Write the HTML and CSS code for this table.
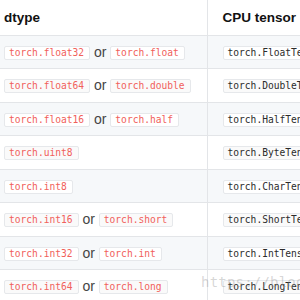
FILE: index.html
```html
<!DOCTYPE html>
<html>
<head>
<meta charset="utf-8">
<link rel="stylesheet" href="styles.css">
</head>
<body>
<div class="wrap">
<table class="tbl">
  <colgroup><col class="c1"><col class="c2"></colgroup>
  <thead>
    <tr><th class="first">dtype</th><th>CPU tensor</th></tr>
  </thead>
  <tbody>
    <tr class="alt"><td class="first"><code class="d">torch.float32</code> or <code class="d">torch.float</code></td><td><code class="t">torch.FloatTensor</code></td></tr>
    <tr><td class="first"><code class="d">torch.float64</code> or <code class="d">torch.double</code></td><td><code class="t">torch.DoubleTensor</code></td></tr>
    <tr class="alt"><td class="first"><code class="d">torch.float16</code> or <code class="d">torch.half</code></td><td><code class="t">torch.HalfTensor</code></td></tr>
    <tr><td class="first"><code class="d">torch.uint8</code></td><td><code class="t">torch.ByteTensor</code></td></tr>
    <tr class="alt"><td class="first"><code class="d">torch.int8</code></td><td><code class="t">torch.CharTensor</code></td></tr>
    <tr><td class="first"><code class="d">torch.int16</code> or <code class="d">torch.short</code></td><td><code class="t">torch.ShortTensor</code></td></tr>
    <tr class="alt"><td class="first"><code class="d">torch.int32</code> or <code class="d">torch.int</code></td><td><code class="t">torch.IntTensor</code></td></tr>
    <tr><td class="first"><code class="d">torch.int64</code> or <code class="d">torch.long</code></td><td><code class="t">torch.LongTensor</code></td></tr>
  </tbody>
</table>
<span class="wm">https://blog.csdn.net</span>
</div>
</body>
</html>
```

FILE: styles.css
```css
html, body {
  margin: 0;
  padding: 0;
  background: #fff;
  overflow: hidden;
  width: 300px;
  height: 300px;
}
.wrap {
  position: relative;
  width: 300px;
  height: 300px;
  overflow: hidden;
}
.tbl {
  border-collapse: collapse;
  table-layout: fixed;
  width: 400px;
  font-family: "Liberation Sans", Arial, sans-serif;
  color: #333;
}
.c1 { width: 207px; }
.c2 { width: 193px; }
.tbl th, .tbl td {
  padding: 0 0 0 15px;
  text-align: left;
  white-space: nowrap;
  border-left: 1px solid #e3e5e8;
  border-bottom: 1px solid #e3e5e8;
}
.tbl th.first, .tbl td.first {
  padding-left: 4px;
  border-left: none;
}
.tbl th {
  height: 35px;
  font-size: 13.5px;
  font-weight: bold;
  color: #111;
  box-sizing: border-box;
  vertical-align: middle;
  padding-top: 1px;
}
.tbl td {
  height: 32.5px;
  font-size: 14px;
  vertical-align: middle;
  color: #444;
}
.tbl tr.alt td { background: #f6f8fa; }
code {
  display: inline-block;
  font-family: "DejaVu Sans Mono", monospace;
  font-size: 9.6px;
  line-height: 12px;
  padding: 0 5px 0 4px;
  border: 1px solid #e6e8eb;
  border-radius: 2px;
  background: #fafafa;
  vertical-align: 1px;
}
.tbl tr.alt code { background: #fff; }
code.d { color: #f1605a; }
code.t { color: #2b2b2b; }
.wm {
  position: absolute;
  left: 201px;
  top: 274px;
  font-family: "DejaVu Sans Mono", monospace;
  font-size: 14px;
  color: rgba(140, 140, 140, 0.35);
  letter-spacing: 0.2px;
  white-space: nowrap;
}
```
